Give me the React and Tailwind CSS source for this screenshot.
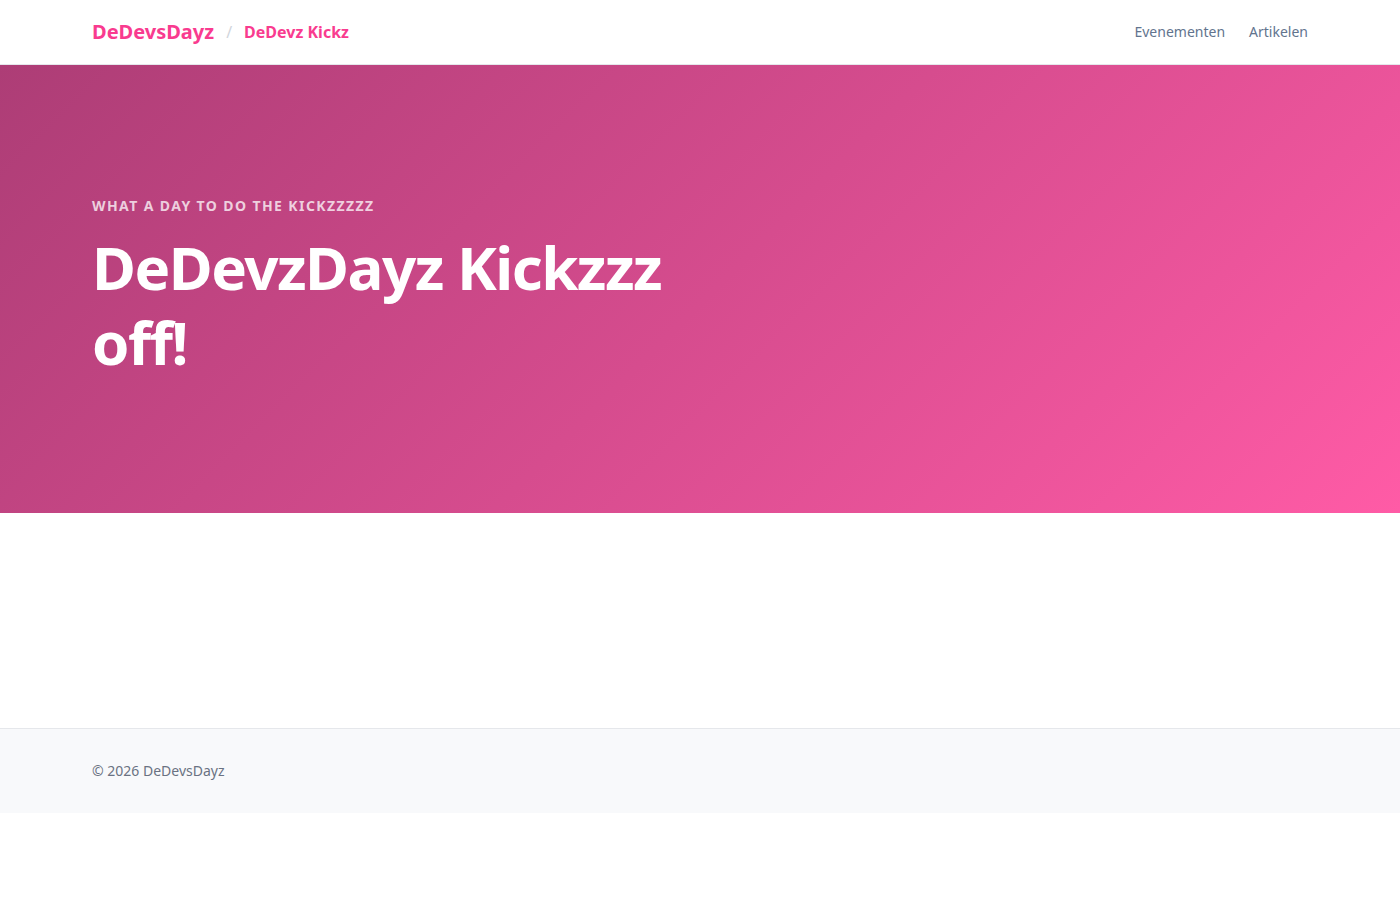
import React from "react";

const navLinks = ["Evenementen", "Artikelen"];

const Header = () => (
  <header className="h-[65px] border-b border-gray-200 bg-white">
    <div className="mx-auto flex h-full max-w-7xl items-center justify-between px-8">
      <div className="flex items-center gap-3">
        <a href="#" className="text-xl font-bold text-[#f93b8f]">
          DeDevsDayz
        </a>
        <span className="text-base text-gray-300">/</span>
        <span className="text-base font-bold text-[#f93b8f]">DeDevz Kickz</span>
      </div>
      <nav className="flex items-center gap-6">
        {navLinks.map((link) => (
          <a key={link} href="#" className="text-sm text-slate-500">
            {link}
          </a>
        ))}
      </nav>
    </div>
  </header>
);

const Hero = () => (
  <section className="bg-linear-135 from-[#ad3d76] to-[#ff5ba6]">
    <div className="mx-auto max-w-7xl px-8 pt-[131px] pb-[133px]">
      <p className="mb-[14px] text-sm font-bold uppercase tracking-widest text-white/75">
        What a day to do the kickzzzzz
      </p>
      <h1 className="max-w-2xl text-6xl font-bold leading-tight tracking-tight text-white">
        DeDevzDayz Kickzzz off!
      </h1>
    </div>
  </section>
);

const Footer = () => (
  <footer className="border-t border-gray-200 bg-[#f8f9fb]">
    <div className="mx-auto max-w-7xl px-8 py-8">
      <p className="text-sm text-gray-500">© 2026 DeDevsDayz</p>
    </div>
  </footer>
);

export default function App() {
  return (
    <div className="min-h-screen bg-white font-['Noto_Sans',sans-serif]">
      <Header />
      <Hero />
      <main className="h-[215px]" />
      <Footer />
    </div>
  );
}
